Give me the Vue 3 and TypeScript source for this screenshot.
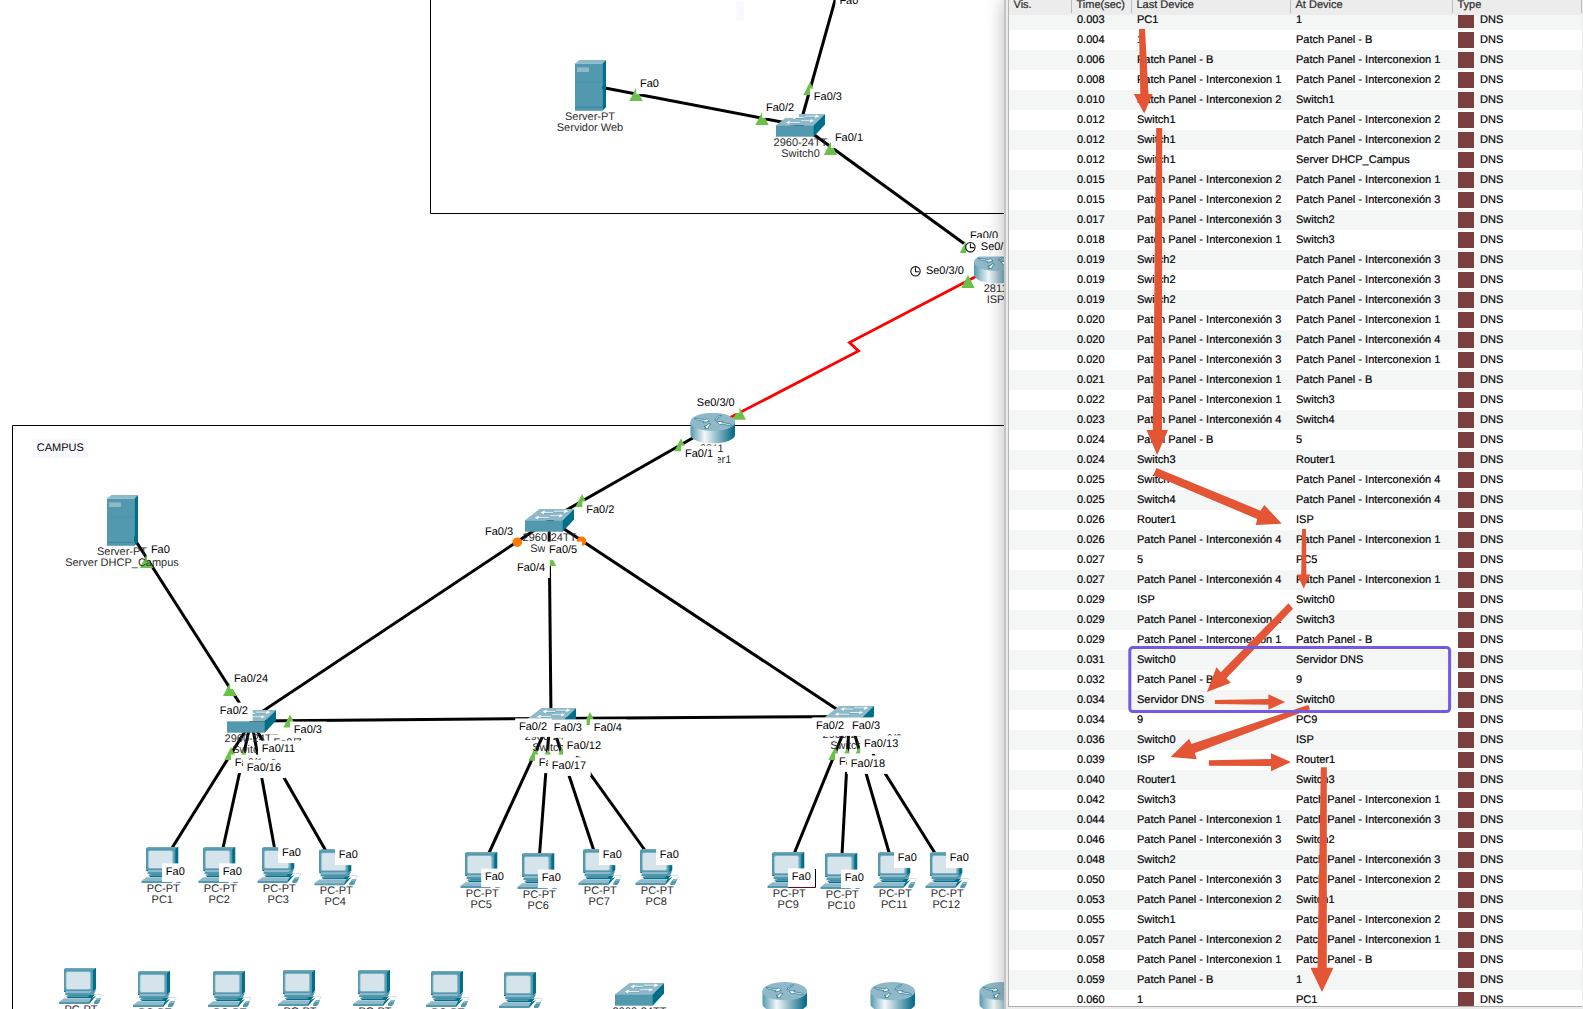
<script setup lang="ts">
interface Pt { x: number; y: number }
interface Device extends Pt { lines: string[] }
interface Tag extends Pt { t: string }
interface Hop { time: string; last: string; at: string }

const wires: number[][] = [
  [839, -14, 800, 125],
  [592, 85.5, 800, 125.5],
  [800, 124.5, 964, 243.5],
  [712, 427, 549, 520],
  [549, 520.5, 251, 719],
  [549, 520, 551, 718],
  [549, 519, 850, 718],
  [122, 519.5, 251, 721],
  [251, 721, 550, 718.5],
  [550, 718.5, 850, 716.5],
  [251.5, 721, 172, 848],
  [251, 721, 223, 848],
  [251.5, 721, 274.5, 848],
  [251.5, 721, 326, 851],
  [551, 718, 488.5, 854],
  [550, 718, 539.5, 855],
  [550, 718, 594, 851],
  [550, 718, 645.5, 851],
  [850, 716.5, 794, 854],
  [849.5, 716.5, 842, 855],
  [849.5, 716.5, 889.5, 854],
  [849.5, 716.5, 935.5, 854],
]

/* apex of every link-up marker */
const lights: Pt[] = [
  { x: 636, y: 88 }, { x: 762, y: 112 }, { x: 810, y: 82 }, { x: 830.5, y: 142 },
  { x: 966.5, y: 240 }, { x: 968, y: 275 }, { x: 739.3, y: 406.7 }, { x: 681, y: 438.3 },
  { x: 582, y: 494 }, { x: 549.5, y: 553 }, { x: 146.5, y: 555 }, { x: 229.7, y: 683 },
  { x: 290, y: 714.5 }, { x: 231, y: 747 }, { x: 243.5, y: 750 }, { x: 590, y: 712 },
  { x: 535, y: 747.7 }, { x: 548, y: 749 }, { x: 562, y: 747.5 }, { x: 578.7, y: 754.5 },
  { x: 835, y: 747 }, { x: 847, y: 748 }, { x: 859, y: 747 },
]

const pcs: Device[] = [
  { x: 141.3, y: 847, lines: ['PC-PT', 'PC1'] }, { x: 198.3, y: 847, lines: ['PC-PT', 'PC2'] },
  { x: 257.3, y: 847, lines: ['PC-PT', 'PC3'] }, { x: 314.3, y: 849.3, lines: ['PC-PT', 'PC4'] },
  { x: 460.3, y: 852, lines: ['PC-PT', 'PC5'] }, { x: 517.3, y: 853, lines: ['PC-PT', 'PC6'] },
  { x: 578.3, y: 849, lines: ['PC-PT', 'PC7'] }, { x: 635.3, y: 849, lines: ['PC-PT', 'PC8'] },
  { x: 767.3, y: 852, lines: ['PC-PT', 'PC9'] }, { x: 820.3, y: 853, lines: ['PC-PT', 'PC10'] },
  { x: 873.3, y: 852, lines: ['PC-PT', 'PC11'] }, { x: 925.3, y: 852, lines: ['PC-PT', 'PC12'] },
  { x: 59, y: 968, lines: ['PC-PT'] }, { x: 133, y: 971, lines: ['PC-PT'] },
  { x: 208, y: 971, lines: ['PC-PT'] }, { x: 278, y: 970, lines: ['PC-PT'] },
  { x: 353, y: 970, lines: ['PC-PT'] }, { x: 426, y: 971, lines: ['PC-PT'] },
  { x: 499, y: 972, lines: [] },
]
const switches: Device[] = [
  { x: 776, y: 114, lines: ['2960-24TT', 'Switch0'] },
  { x: 525, y: 509, lines: ['2960-24TT', 'Switch3'] },
  { x: 227, y: 710, lines: ['2960-24TT', 'Switch1'] },
  { x: 527, y: 708, lines: ['2960-24TT', 'Switch2'] },
  { x: 825, y: 705.7, lines: ['2960-24TT', 'Switch4'] },
  { x: 615, y: 983, lines: ['2960-24TT'] },
]
const routers: Device[] = [
  { x: 974, y: 252.7, lines: ['2811', 'ISP'] },
  { x: 690.3, y: 412.7, lines: ['2811', 'Router1'] },
  { x: 762.3, y: 982, lines: [] },
  { x: 870.3, y: 982, lines: [] },
  { x: 979.3, y: 982, lines: [] },
]
const servers: Device[] = [
  { x: 575, y: 60, lines: ['Server-PT', 'Servidor Web'] },
  { x: 107, y: 495, lines: ['Server-PT', 'Server DHCP_Campus'] },
]

const tags: Tag[] = [
  { x: 839.9, y: 3.6, t: 'Fa0' }, { x: 640.5, y: 87, t: 'Fa0' }, { x: 766.5, y: 110.8, t: 'Fa0/2' },
  { x: 814.3, y: 100, t: 'Fa0/3' }, { x: 835.4, y: 140.8, t: 'Fa0/1' }, { x: 970.4, y: 239, t: 'Fa0/0' },
  { x: 697.3, y: 405.8, t: 'Se0/3/0' }, { x: 685.5, y: 457, t: 'Fa0/1' }, { x: 586.7, y: 512.8, t: 'Fa0/2' },
  { x: 485.5, y: 534.8, t: 'Fa0/3' }, { x: 549.6, y: 553, t: 'Fa0/5' }, { x: 517.5, y: 570.8, t: 'Fa0/4' },
  { x: 151.4, y: 552.8, t: 'Fa0' }, { x: 234.4, y: 681.8, t: 'Fa0/24' }, { x: 220.3, y: 714, t: 'Fa0/2' },
  { x: 294.3, y: 733, t: 'Fa0/3' }, { x: 274, y: 746, t: 'Fa0/7' }, { x: 262.3, y: 752, t: 'Fa0/11' },
  { x: 235.3, y: 766, t: 'Fa0/1' }, { x: 247.3, y: 771, t: 'Fa0/16' },
  { x: 519.5, y: 729.8, t: 'Fa0/2' }, { x: 577.3, y: 743.5, t: 'Fa0/8' }, { x: 554.3, y: 730.8, t: 'Fa0/3' },
  { x: 594.3, y: 730.8, t: 'Fa0/4' }, { x: 567.3, y: 749, t: 'Fa0/12' }, { x: 539.3, y: 766, t: 'Fa0/1' },
  { x: 552.3, y: 768.8, t: 'Fa0/17' },
  { x: 816.5, y: 728.8, t: 'Fa0/2' }, { x: 874.3, y: 741.5, t: 'Fa0/9' }, { x: 852.5, y: 728.8, t: 'Fa0/3' },
  { x: 864.5, y: 746.8, t: 'Fa0/13' }, { x: 839.5, y: 764.8, t: 'Fa0/1' }, { x: 851.3, y: 766.8, t: 'Fa0/18' },
  { x: 166.3, y: 874.8, t: 'Fa0' }, { x: 223.3, y: 874.8, t: 'Fa0' }, { x: 282.5, y: 856, t: 'Fa0' },
  { x: 339.3, y: 858, t: 'Fa0' }, { x: 485.5, y: 880, t: 'Fa0' }, { x: 542.3, y: 881, t: 'Fa0' },
  { x: 603.3, y: 858, t: 'Fa0' }, { x: 660.3, y: 858, t: 'Fa0' }, { x: 792.3, y: 879.8, t: 'Fa0' },
  { x: 845.3, y: 881, t: 'Fa0' }, { x: 898.3, y: 861, t: 'Fa0' }, { x: 950.3, y: 861, t: 'Fa0' },
]
const tagWidth = (t: string): number => {
  let w = 8.5
  for (const c of t) w += (c === '/' ? 0.278 : c === 'F' ? 0.611 : c === 'S' ? 0.667 : 0.556) * 11
  return w
}

const P = 'Patch Panel - '
const C1 = P + 'Interconexion 1'
const C2 = P + 'Interconexion 2'
const C3 = P + 'Interconexión 3'
const C4 = P + 'Interconexión 4'
const B = P + 'B'
const raw: [string, string, string][] = [
  ['0.003', 'PC1', '1'], ['0.004', '1', B], ['0.006', B, C1], ['0.008', C1, C2], ['0.010', C2, 'Switch1'],
  ['0.012', 'Switch1', C2], ['0.012', 'Switch1', C2], ['0.012', 'Switch1', 'Server DHCP_Campus'],
  ['0.015', C2, C1], ['0.015', C2, C3], ['0.017', C3, 'Switch2'], ['0.018', C1, 'Switch3'],
  ['0.019', 'Switch2', C3], ['0.019', 'Switch2', C3], ['0.019', 'Switch2', C3],
  ['0.020', C3, C1], ['0.020', C3, C4], ['0.020', C3, C1], ['0.021', C1, B], ['0.022', C1, 'Switch3'],
  ['0.023', C4, 'Switch4'], ['0.024', B, '5'], ['0.024', 'Switch3', 'Router1'], ['0.025', 'Switch4', C4],
  ['0.025', 'Switch4', C4], ['0.026', 'Router1', 'ISP'], ['0.026', C4, C1], ['0.027', '5', 'PC5'],
  ['0.027', C4, C1], ['0.029', 'ISP', 'Switch0'], ['0.029', C1, 'Switch3'], ['0.029', C1, B],
  ['0.031', 'Switch0', 'Servidor DNS'], ['0.032', B, '9'], ['0.034', 'Servidor DNS', 'Switch0'],
  ['0.034', '9', 'PC9'], ['0.036', 'Switch0', 'ISP'], ['0.039', 'ISP', 'Router1'], ['0.040', 'Router1', 'Switch3'],
  ['0.042', 'Switch3', C1], ['0.044', C1, C3], ['0.046', C3, 'Switch2'], ['0.048', 'Switch2', C3],
  ['0.050', C3, C2], ['0.053', C2, 'Switch1'], ['0.055', 'Switch1', C2], ['0.057', C2, C1],
  ['0.058', C1, B], ['0.059', B, '1'], ['0.060', '1', 'PC1'],
]
const hops: Hop[] = raw.map(([time, last, at]) => ({ time, last, at }))

const arrows: string[] = [
  '1139,29 1145,29 1148.5,94 1152.6,94 1144.2,113.5 1133.8,94 1140.3,94',
  '1156.2,128 1162.2,128 1162,430 1168,430 1157.2,455 1146.5,430 1152.8,430',
  '1156.5,468 1260.6,510.7 1264.3,505 1281.8,523.7 1255.8,525 1257.2,519 1153.2,475',
  '1302,529 1306,529 1306.4,574.5 1310.4,574.5 1303.7,588.5 1297,574.5 1301.2,574.5',
  '1288.5,603.3 1293,608.7 1226.4,678.3 1230.9,682.7 1207,692 1216.4,667.3 1220.8,672.3',
  '1214.9,700 1268.4,699 1268.4,694.3 1285.1,702 1268.4,709.7 1268.4,704.7 1214.9,704',
  '1308.2,705 1310,709.3 1194.8,753 1196.7,759.3 1170.6,757 1189.2,738.7 1191.4,744',
  '1208.9,760.3 1271,759 1271,753.3 1291,762 1271,771.3 1271,766 1208.9,765.7',
  '1320.8,767.3 1326.8,767.3 1326.8,967.7 1333.5,967.7 1322,992 1310.4,967.7 1317.5,967.7',
]
</script>

<template>
  <div class="screen">
    <main class="workspace">
      <svg class="topology" width="1004" height="1009" viewBox="0 0 1004 1009">
        <defs>
          <linearGradient id="barrel" x1="0" x2="1" y1="0" y2="0">
            <stop offset="0" stop-color="#5197ad" />
            <stop offset="0.32" stop-color="#f3f8fa" />
            <stop offset="0.5" stop-color="#b6d0da" />
            <stop offset="0.95" stop-color="#0c6f8a" />
            <stop offset="1" stop-color="#0c6f8a" />
          </linearGradient>
          <symbol id="pc" width="45" height="37" viewBox="0 0 45 37">
            <path d="M5 1 L8 0 H37 V21 L34 24 H5Z" fill="#00708a" />
            <path d="M5 1 L8 0 H37 L34 2 H5Z" fill="#6ea7b9" />
            <rect x="5" y="1.4" width="29" height="21.6" fill="#5298ae" />
            <rect x="6.6" y="3.3" width="25.6" height="18.4" rx="1.6" fill="#8fb9c9" />
            <rect x="7.5" y="4" width="23.5" height="17" rx="1.5" fill="#d4e4ea" />
            <path d="M7 23 H34 L37 22 L35 26 L33 27 H6 Z" fill="#5298ae" />
            <path d="M7 23 H33 L31 25 H6 Z" fill="#8fb9c9" />
            <path d="M10 27 H33 L36 26 L33 30 H8 Z" fill="#00708a" />
            <path d="M8 27.2 H31 L29 29 H7 Z" fill="#5298ae" />
            <path d="M5 30.2 H32 L30 34 H0 Z" fill="#8fb9c9" />
            <path d="M0 34 H30 V36 H0Z" fill="#5298ae" />
            <path d="M32 30.2 L37 28 L30 36 V34Z" fill="#00708a" />
            <path d="M35 34 L38 30 H42 L40.5 34 L39 36 H35Z" fill="#5298ae" />
            <path d="M37 32 L38.5 30 H42 L40 32Z" fill="#8fb9c9" />
            <path d="M36 26.3 H42 Q45 27.5 41 29.4" fill="none" stroke="#b9d3dc" stroke-width="0.8" />
          </symbol>
          <symbol id="switch" width="50" height="23" viewBox="0 0 50 23">
            <path d="M0 11.3 L14.5 0 H49 L37.7 11.3Z" fill="#8fb9c9" />
            <rect x="0" y="11.3" width="38" height="11.4" fill="#5298ae" />
            <path d="M49 0 V10.5 L37.7 22.7 V11.3Z" fill="#00708a" />
            <g fill="none" stroke="#5298ae" stroke-width="0.6">
              <path d="M18 4.2H28 M29 3H41 M12 9.3H24 M25 7.6H36" />
            </g>
            <g fill="none" stroke="#fff" stroke-width="0.8">
              <path d="M17 3.4H28 M29 2.2H41 M11 8.6H24 M25 6.8H36" />
            </g>
            <g fill="#fff">
              <path d="M15.5 3.4 L20 1.6 L18.8 5.2Z M43.5 2.2 L40 .6 L38.6 4.2Z M9.8 8.6 L14 6.8 L13 10.2Z M38 6.8 L35 5.2 L33.6 8.6Z" />
            </g>
          </symbol>
          <symbol id="router" width="45" height="31" viewBox="0 0 45 31">
            <path d="M0 9 V22 A22.4 8.8 0 0 0 44.8 22 V9Z" fill="url(#barrel)" />
            <ellipse cx="22.4" cy="9.2" rx="22.4" ry="9.1" fill="#8fb9c9" />
            <g stroke="#00607a" stroke-width="0.6" fill="#fff">
              <path d="M4 5.4 L14.5 7 L16.5 6 L19 8.4 L13 10 L13.8 8.6 L6 7Z" />
              <path d="M24.5 7.4 L27.5 3.6 L31 2.6 L30.5 4 L27.8 4.8 L26.5 7.2Z" />
              <path d="M41 13 L31 11.3 L29.5 12 L26.5 9 L32.4 8.6 L31.5 9.8 L40.5 11.4Z" />
              <path d="M13.8 13.4 L16 13.2 L18 11.2 L20.5 11.4 L18.5 13.6 L18 15.6 L14.4 15.6 L15.6 14.6Z" />
            </g>
          </symbol>
          <symbol id="server" width="32" height="52" viewBox="0 0 32 52">
            <path d="M0 3.6 L4.5 0 H31 L27.4 3.6Z" fill="#8fb9c9" />
            <rect y="3.6" width="27.5" height="47.2" fill="#5298ae" />
            <path d="M31 0 V47.2 L27.4 50.8 V3.6Z" fill="#00708a" />
            <rect x="2" y="7.4" width="12" height="4.6" fill="#8fb9c9" />
            <path d="M0 22.3H27.4" stroke="#4a90a8" stroke-width="0.6" />
            <path d="M0 47.4H27.4" stroke="#34829c" stroke-width="0.8" />
          </symbol>
        </defs>

        <path class="frame" d="M430.5 -2 V213.5 H1010" />
        <path class="frame" d="M12.5 1012 V425.5 H1010" />
        <rect x="736.5" y="1.5" width="7.5" height="19" fill="#f8f8ff" />
        <rect x="33" y="439" width="55" height="19" fill="#f8f8ff" />
        <text x="36.8" y="451">CAMPUS</text>

        <line v-for="(w, i) in wires" :key="'w' + i" class="wire" :x1="w[0]" :y1="w[1]" :x2="w[2]" :y2="w[3]" />
        <path class="serial" d="M996 266 L849.5 342.5 L858.5 351 L712 427" />

        <use v-for="(d, i) in servers" :key="'sv' + i" href="#server" :x="d.x" :y="d.y" />
        <use v-for="(d, i) in switches" :key="'sw' + i" href="#switch" :x="d.x" :y="d.y" />
        <use v-for="(d, i) in routers" :key="'r' + i" href="#router" :x="d.x" :y="d.y" />
        <use v-for="(d, i) in pcs" :key="'p' + i" href="#pc" :x="d.x" :y="d.y" />

        <path v-for="(l, i) in lights" :key="'l' + i" class="up" :d="`M${l.x} ${l.y} l6.7 13 h-13.4z`" />
        <circle class="blocked" cx="581.5" cy="541.2" r="4.8" />

        <g class="device-name">
          <template v-for="(d, i) in servers" :key="'svt' + i">
            <text v-for="(t, j) in d.lines" :key="j" :x="d.x + 15" :y="d.y + 60.2 + j * 11">{{ t }}</text>
          </template>
          <template v-for="(d, i) in switches" :key="'swt' + i">
            <text v-for="(t, j) in d.lines" :key="j" :x="d.x + 24.5" :y="d.y + 32.2 + j * 11">{{ t }}</text>
          </template>
          <template v-for="(d, i) in routers" :key="'rt' + i">
            <text v-for="(t, j) in d.lines" :key="j" :x="d.x + 21.5" :y="d.y + 39 + j * 11">{{ t }}</text>
          </template>
          <template v-for="(d, i) in pcs" :key="'pt' + i">
            <text v-for="(t, j) in d.lines" :key="j" :x="d.x + 22 - j" :y="d.y + 44.8 + j * 11">{{ t }}</text>
          </template>
        </g>

        <g v-for="(g, i) in tags" :key="'t' + i">
          <rect :x="g.x - 4.3" :y="g.y - 11.4" :width="tagWidth(g.t)" height="18.5" fill="#fff" />
          <text :x="g.x - 0.5" :y="g.y">{{ g.t }}</text>
        </g>
        <circle class="blocked" cx="517.3" cy="542.2" r="4.8" />
        <rect x="966" y="238" width="60" height="18.5" fill="#fff" />
        <text x="980.8" y="249.8">Se0/3/1</text>
        <text x="925.9" y="274">Se0/3/0</text>
        <g class="clock">
          <circle cx="970.4" cy="247.2" r="4.7" />
          <path d="M970.4 243.5 V247.6 H974" />
          <circle cx="915.5" cy="271.3" r="4.7" />
          <path d="M915.5 267.6 V271.7 H919" />
        </g>
        <path d="M815.5 869 V887.5" fill="none" stroke="#000" />
        <path d="M788.5 887.5 H815.5" fill="none" stroke="#5a1414" />
      </svg>
    </main>

    <aside class="events">
      <section class="grid">
        <header class="row head">
          <span>Vis.</span><span>Time(sec)</span><span>Last Device</span><span>At Device</span><span>Type</span>
        </header>
        <div class="body">
          <div class="rows">
            <div v-for="(h, i) in hops" :key="i" class="row" :class="{ alt: i % 2 === 0 }">
              <span></span>
              <span>{{ h.time }}</span>
              <span>{{ h.last }}</span>
              <span>{{ h.at }}</span>
              <span class="kind"><i class="swatch"></i>DNS</span>
            </div>
          </div>
        </div>
      </section>
    </aside>

    <svg class="marks" width="1583" height="1009" viewBox="0 0 1583 1009">
      <polygon v-for="(a, i) in arrows" :key="i" :points="a" fill="#e35534" />
      <rect x="1129.8" y="647.5" width="319.8" height="64" rx="3" fill="none" stroke="#7658e6" stroke-width="3" />
    </svg>
  </div>
</template>

<style>
body {
  margin: 0;
  background: #fff;
}
</style>

<style scoped>
.screen {
  position: relative;
  display: flex;
  width: 1583px;
  height: 1009px;
  overflow: hidden;
  background: #fff;
  font-family: "Liberation Sans", Arial, Helvetica, sans-serif;
  font-size: 11px;
  color: #000;
  -webkit-text-stroke: 0.2px currentColor;
}
.workspace {
  flex: 0 0 1004px;
  height: 1009px;
}
.topology {
  display: block;
  overflow: hidden;
}
.topology text {
  font-size: 11px;
  text-rendering: geometricPrecision;
}
.device-name text {
  text-anchor: middle;
  fill: #2c2c2c;
}
.frame {
  fill: none;
  stroke: #000;
  stroke-width: 1;
}
.wire {
  stroke: #000;
  stroke-width: 3;
}
.serial {
  fill: none;
  stroke: #f00;
  stroke-width: 2.8;
}
.up {
  fill: #6cc04a;
}
.blocked {
  fill: #ff7800;
}
.clock {
  fill: none;
  stroke: #111;
  stroke-width: 1.1;
}
.events {
  position: relative;
  box-sizing: border-box;
  display: flex;
  flex: 1;
  height: 1009px;
  padding: 0 1px 2px 2px;
  border-left: 2px solid #c4c4c4;
  background: #ececec;
  box-shadow: 0 0 18px rgba(0, 0, 0, 0.28);
}
.grid {
  box-sizing: border-box;
  display: flex;
  flex-direction: column;
  flex: 1;
  height: 1007px;
  border-left: 1px solid #b4b4b4;
  border-bottom: 1px solid #b0b0b0;
  background: #fff;
}
.row {
  display: grid;
  grid-template-columns: 62px 60px 159px 162px 1fr;
  height: 20px;
  line-height: 20px;
  white-space: nowrap;
  text-rendering: geometricPrecision;
}
.row.alt {
  background: #f4f6f5;
}
.row span {
  padding-left: 6px;
}
.head {
  grid-template-columns: 63px 60px 159px 162px 1fr;
  height: 15px;
  line-height: 10px;
  background: #ececec;
  color: #2a2a2a;
}
.head span {
  box-sizing: border-box;
  height: 13px;
  padding-left: 4.5px;
  border-right: 1px solid #bcbcbc;
}
.body {
  flex: 1;
  overflow: hidden;
}
.rows {
  margin-top: -5px;
}
.row .kind {
  display: flex;
  align-items: center;
  gap: 6px;
}
.swatch {
  width: 16px;
  height: 16px;
  background: #7c3f3f;
}
.marks {
  position: absolute;
  left: 0;
  top: 0;
  pointer-events: none;
}
</style>
